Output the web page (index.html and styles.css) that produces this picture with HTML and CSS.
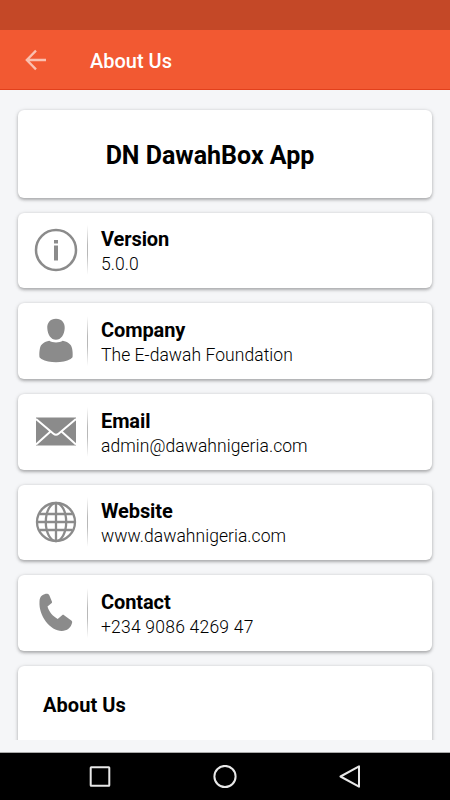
FILE: index.html
```html
<!DOCTYPE html>
<html lang="en">
<head>
<meta charset="utf-8">
<title>About Us</title>
<link rel="stylesheet" href="styles.css">
</head>
<body>
<div class="screen">
  <div class="status-bar"></div>
  <header class="toolbar">
    <svg class="back" viewBox="0 0 22 22"><path d="M21 11H2M11 1.6L1.8 11L11 20.4"/></svg>
    <h1>About Us</h1>
  </header>
  <main class="content">
    <section class="card hero"><h2>DN DawahBox App</h2></section>
    <section class="card row">
      <svg class="icon" viewBox="0 0 44 44"><circle class="line" cx="22" cy="22" r="20" stroke-width="2.5"/><path d="M20 12h4v3.6h-4zM20 17.5h4v15h-4z"/></svg>
      <div class="divider"></div>
      <div class="info"><h3>Version</h3><p>5.0.0</p></div>
    </section>
    <section class="card row">
      <svg class="icon" viewBox="0 0 44 44"><path d="M22 -.3c5.800 0 9 4.200 8.700 9.500-.3 6.400-3.700 11.600-8.700 11.600s-8.400-5.200-8.700-11.600C13 3.900 16.200-.3 22-.3zM15.300 21.800c3 2.300 10.400 2.300 13.400 0 5.200 1.200 8.600 3.500 9.400 7.600.5 2.600.7 5 .5 8.100 0 1-.7 1.700-2 2.400-8 4.300-21.200 4.300-29.200 0-1.300-.7-2-1.400-2-2.400-.2-3.100 0-5.500.5-8.100.8-4.100 4.200-6.400 9.400-7.600z"/></svg>
      <div class="divider"></div>
      <div class="info"><h3>Company</h3><p>The E-dawah Foundation</p></div>
    </section>
    <section class="card row">
      <svg class="icon" viewBox="0 0 44 44"><path d="M2 7.500h40v28H2z"/><path class="seam" d="M2 9L19.500 23.700Q22 25.800 24.500 23.700L42 9M2 34.500L16.500 21.500M42 34.500L27.500 21.500"/></svg>
      <div class="divider"></div>
      <div class="info"><h3>Email</h3><p>admin@dawahnigeria.com</p></div>
    </section>
    <section class="card row">
      <svg class="icon" viewBox="0 0 44 44"><g class="line" stroke-width="2.300"><circle cx="22" cy="22" r="19"/><ellipse cx="22" cy="22" rx="10.200" ry="19"/><path d="M22 3v38M3 22h38M5.500 14h33M5.500 30h33"/></g></svg>
      <div class="divider"></div>
      <div class="info"><h3>Website</h3><p>www.dawahnigeria.com</p></div>
    </section>
    <section class="card row">
      <svg class="icon" viewBox="0 0 44 44"><path d="M8 4.500c2-1.500 4.500-2 6-1.600.7.200 1 .6 1.300 1.300l2.600 6.200c.3.900.1 1.400-.5 1.900l-3.900 3.200c1.500 5.400 5.200 9.700 10.200 12.400l4.400-3.600c.7-.6 1.300-.6 2 0l7.200 5.300c.8.600 1 1.200.8 2.200-1.200 5-5 8.200-10.300 8.200C16.500 40 4.500 25 5.500 10.500 5.600 7.800 6.300 5.700 8 4.500z"/></svg>
      <div class="divider"></div>
      <div class="info"><h3>Contact</h3><p class="phone">+234 9086 4269 47</p></div>
    </section>
    <section class="card about"><h3>About Us</h3></section>
  </main>
  <nav class="nav-bar">
    <svg viewBox="0 0 24 24"><rect x="2.700" y="2.200" width="18.600" height="18.600" rx=".5"/></svg>
    <svg viewBox="0 0 24 24"><circle cx="12" cy="11.500" r="10.600"/></svg>
    <svg viewBox="0 0 24 24"><path d="M21 1.300v20.400L2.500 11.500z"/></svg>
  </nav>
</div>
</body>
</html>
```
FILE: styles.css
```css
* { box-sizing: border-box; }
body { margin: 0; font-family: Roboto, "Liberation Sans", sans-serif; }
h1, h2, h3, p { margin: 0; white-space: nowrap; }
svg { display: block; flex: none; }
.screen { width: 450px; height: 800px; display: flex; flex-direction: column; overflow: hidden; background: #f5f6f8; }
.status-bar { height: 30px; flex: none; background: #c44827; }
.toolbar { height: 60px; flex: none; display: flex; align-items: center; gap: 43px; padding-left: 25px; background: #f25932; border-bottom: 1px solid #e2401c; color: #fff; }
.back { width: 22px; height: 22px; fill: none; stroke: #fac0b0; stroke-width: 2.3; }
h1 { font-size: 20px; line-height: 24px; font-weight: 500; padding-top: 2px; }
.content { height: 650px; flex: none; overflow: hidden; padding: 20px 18px 0; display: flex; flex-direction: column; gap: 15px; }
.card { flex: none; background: #fff; border-radius: 6px; box-shadow: 0 1.5px 3px rgba(0,0,0,.23), 0 1px 5px rgba(0,0,0,.13); }
.hero { height: 87.5px; display: flex; align-items: center; justify-content: center; padding: 4px 30px 0 0; }
.hero h2 { font-size: 25px; line-height: 30px; font-weight: 700; }
.row { height: 75.7px; display: flex; align-items: center; padding-left: 15.5px; }
.icon { width: 44px; height: 44px; overflow: visible; fill: #8b8b8b; }
.line { fill: none; stroke: #8b8b8b; }
.seam { fill: none; stroke: #fff; stroke-width: 2; }
.divider { width: 1px; height: 50px; margin: 0 13px 0 9.5px; background: linear-gradient(transparent, #b8b8b8 40%, #b8b8b8 60%, transparent); }
.info { padding-top: 3.6px; }
h3 { font-size: 20px; line-height: 25px; font-weight: 700; letter-spacing: -.1px; color: #000; }
.info p { font-size: 17.5px; line-height: 25px; font-weight: 300; letter-spacing: .05px; color: #000; }
.info .phone { letter-spacing: .22px; }
.about { height: 120px; padding: 27px 25px; }
.about h3 { letter-spacing: .05px; }
.nav-bar { height: 48px; flex: none; margin-top: 12px; border-top: 1px solid #aaa; background: #000; display: flex; align-items: center; justify-content: space-between; padding: 0 88px; }
.nav-bar svg { width: 24px; height: 24px; fill: none; stroke: #e8e8e8; stroke-width: 2; stroke-linejoin: round; }
```
